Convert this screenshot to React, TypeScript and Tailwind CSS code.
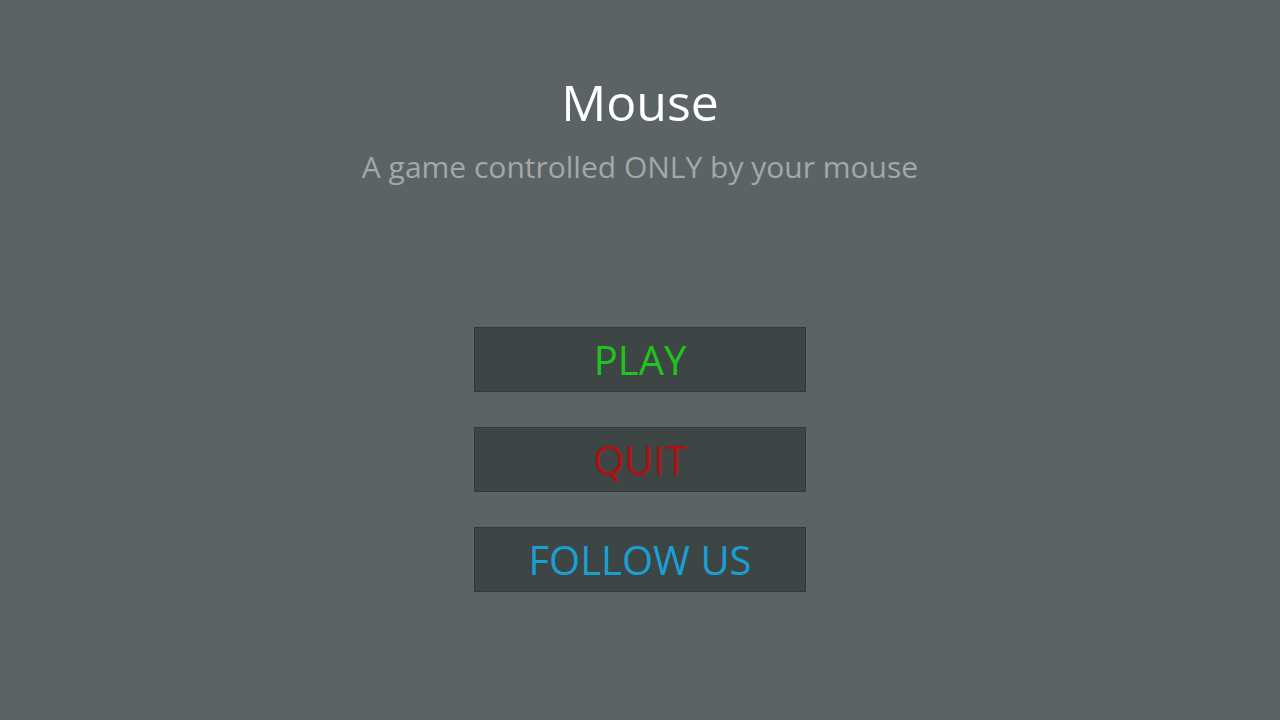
import React from "react";

export default function App() {
  const btn =
    "w-[332px] h-[65px] bg-[#3e4545] border border-[#343a3a] flex items-center justify-center text-[40px] leading-none";
  return (
    <div
      className="w-[1280px] h-[720px] bg-[#5c6365] flex flex-col items-center"
      style={{ fontFamily: '"Open Sans", sans-serif' }}
    >
      <h1 className="mt-[70px] text-[50px] leading-[64px] text-white">Mouse</h1>
      <p className="mt-[13px] text-[30px] leading-[40px] text-[#a3a8a8]">
        A game controlled ONLY by your mouse
      </p>
      <div className="mt-[140px] flex flex-col gap-[35px]">
        <div className={btn + " text-[#1fc41f]"}>PLAY</div>
        <div className={btn + " text-[#b01010]"}>QUIT</div>
        <div className={btn + " text-[#1a9fd2]"}>FOLLOW US</div>
      </div>
    </div>
  );
}
